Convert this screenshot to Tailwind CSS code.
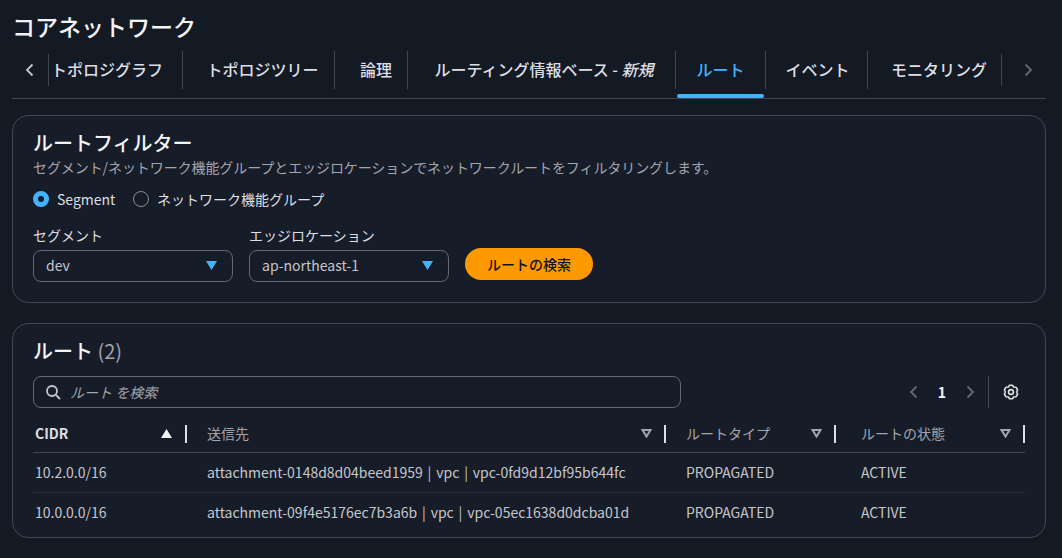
<!DOCTYPE html>
<html lang="ja">

<head>
  <meta charset="UTF-8">
  <title>コアネットワーク</title>
  <script src="https://cdn.jsdelivr.net/npm/@tailwindcss/browser@4"></script>
</head>

<body class="h-[558px] w-[1062px] overflow-hidden bg-[#131a23] text-[#dedee3] font-['Noto_Sans_CJK_JP','Noto_Sans',sans-serif]">
  <div class="pl-3 pr-4">
    <h1 class="h-[51px] pt-[8px] text-[23px] leading-[36px] font-medium text-[#f3f3f7]">コアネットワーク</h1>

    <!-- tabs -->
    <div class="flex h-[48px] border-b border-[#424650] text-[16px] font-medium">
      <div class="flex h-[47px] w-[36px] shrink-0 items-start pt-[11px] pl-[10px]">
        <svg class="h-4 w-4 text-[#c6c6cd]" viewBox="0 0 16 16" fill="none" stroke="currentColor" stroke-width="1.8"><path d="M10.5 2.5 5 8l5.5 5.5" /></svg>
      </div>
      <div class="mt-[3px] h-[32px] w-px bg-[#424650]"></div>
      <div class="flex h-[38px] w-[133px] items-center pb-[3px] pl-[2px]">トポロジグラフ</div>
      <div class="h-[38px] w-px bg-[#424650]"></div>
      <div class="flex h-[38px] w-[151px] items-center justify-center pb-[3px] pl-[8px]">トポロジツリー</div>
      <div class="h-[38px] w-px bg-[#424650]"></div>
      <div class="flex h-[38px] w-[72px] items-center justify-center pb-[3px] pl-[10px]">論理</div>
      <div class="h-[38px] w-px bg-[#424650]"></div>
      <div class="flex h-[38px] w-[267px] items-center justify-center pb-[3px] pl-[5px]">ルーティング情報ベース -&nbsp;<i>新規</i></div>
      <div class="h-[38px] w-px bg-[#424650]"></div>
      <div class="relative flex h-[38px] w-[89px] items-center justify-center pb-[3px] text-[#42b4ff]">
        ルート
        <div class="absolute top-[43px] left-[1px] right-[1px] h-[4px] rounded-[2px] bg-[#42b4ff]"></div>
      </div>
      <div class="h-[38px] w-px bg-[#424650]"></div>
      <div class="flex h-[38px] w-[101px] items-center justify-center pb-[3px] pl-[2px]">イベント</div>
      <div class="h-[38px] w-px bg-[#424650]"></div>
      <div class="flex h-[38px] w-[133px] items-center justify-center pb-[3px] pl-[9px]">モニタリング</div>
      <div class="mt-[3px] h-[32px] w-px bg-[#424650]"></div>
      <div class="flex h-[38px] items-center pl-[18px]">
        <svg class="h-4 w-4 text-[#656871]" viewBox="0 0 16 16" fill="none" stroke="currentColor" stroke-width="1.8"><path d="M5.5 2.5 11 8l-5.5 5.5" /></svg>
      </div>
    </div>

    <!-- route filter -->
    <section class="mt-4 h-[188px] rounded-2xl border border-[#424650] bg-[#161d28] px-[20px] pt-[13px]">
      <h2 class="text-[20px] leading-[28px] font-medium text-[#f3f3f7]">ルートフィルター</h2>
      <p class="text-[14px] leading-[20px] tracking-[-0.08px] text-[#a4a4ad]">セグメント/ネットワーク機能グループとエッジロケーションでネットワークルートをフィルタリングします。</p>
      <div class="mt-[12px] flex h-[20px] items-center text-[14px]">
        <span class="h-4 w-4 rounded-full border-[5px] border-[#42b4ff] bg-[#161d28]"></span>
        <span class="ml-2 w-[59px]">Segment</span>
        <span class="ml-[17px] h-4 w-4 rounded-full border border-[#8c8c94]"></span>
        <span class="ml-2">ネットワーク機能グループ</span>
      </div>
      <div class="mt-[17px] flex items-end gap-4">
        <div class="w-[200px]">
          <div class="text-[14px] leading-[18px]">セグメント</div>
          <div class="mt-[6px] flex h-[32px] items-center justify-between rounded-lg border border-[#656871] pr-[15px] pl-3 pb-px text-[14px] text-[#c6c6cd]">
            dev
            <svg class="h-[9px] w-[11px] text-[#42b4ff]" viewBox="0 0 11 9" fill="currentColor"><path d="M0 0h11L5.5 9z" /></svg>
          </div>
        </div>
        <div class="w-[200px]">
          <div class="text-[14px] leading-[18px]">エッジロケーション</div>
          <div class="mt-[6px] flex h-[32px] items-center justify-between rounded-lg border border-[#656871] pr-[15px] pl-3 pb-px text-[14px] text-[#c6c6cd]">
            ap-northeast-1
            <svg class="h-[9px] w-[11px] text-[#42b4ff]" viewBox="0 0 11 9" fill="currentColor"><path d="M0 0h11L5.5 9z" /></svg>
          </div>
        </div>
        <button class="mb-[2px] flex h-[32px] w-[128px] items-center justify-center rounded-full bg-[#ff9900] text-[14px] font-medium text-[#0f141a]">ルートの検索</button>
      </div>
    </section>

    <!-- routes -->
    <section class="mt-[20px] h-[215px] rounded-2xl border border-[#424650] bg-[#161d28] px-[20px] pt-[13px]">
      <h2 class="text-[20px] leading-[28px] font-medium text-[#f3f3f7]">ルート <span class="font-normal text-[#a4a4ad]">(2)</span></h2>
      <div class="mt-[11px] flex items-center">
        <div class="flex h-[32px] w-[648px] items-center rounded-lg border border-[#656871] pl-[11px] text-[14px] text-[#a4a4ad] italic">
          <svg class="mr-[9px] h-4 w-4 text-[#c6c6cd]" viewBox="0 0 16 16" fill="none" stroke="currentColor" stroke-width="1.8"><circle cx="7" cy="7" r="5" /><path d="m11 11 4 4" /></svg>
          ルート を検索
        </div>
        <div class="ml-[225px] flex h-[32px] items-center">
          <svg class="h-4 w-4 text-[#656871]" viewBox="0 0 16 16" fill="none" stroke="currentColor" stroke-width="1.8"><path d="M10.5 2.5 5 8l5.5 5.5" /></svg>
          <span class="w-[40px] text-center text-[14px] font-bold text-[#f3f3f7]">1</span>
          <svg class="h-4 w-4 text-[#656871]" viewBox="0 0 16 16" fill="none" stroke="currentColor" stroke-width="1.8"><path d="M5.5 2.5 11 8l-5.5 5.5" /></svg>
          <div class="ml-[10px] h-[32px] w-px bg-[#424650]"></div>
          <svg class="ml-[14px] h-4 w-4 text-[#dedee3]" viewBox="0 0 16 16" fill="none" stroke="currentColor" stroke-width="1.6" stroke-linejoin="round"><path d="M6.5 1.3h3L10.6 3l2.4.2 1.6 2.8L13.6 8l1 2-1.6 2.8-2.4.2-1.1 1.7h-3L5.4 13 3 12.8 1.4 10l1-2-1-2L3 3.2 5.4 3z" /><circle cx="8" cy="8" r="2.4" /></svg>
        </div>
      </div>
      <div class="mt-[7px] w-[992px] text-[14px]">
        <div class="grid h-[38px] grid-cols-[154px_479px_170px_189px] items-center border-b border-[#424650] text-[#a4a4ad]">
          <div class="flex items-center pl-[2px] font-bold text-[#dedee3]">
            CIDR
            <svg class="mr-[13px] ml-auto h-[9px] w-[11px] text-[#f3f3f7]" viewBox="0 0 11 9" fill="currentColor"><path d="M5.5 0 11 9H0z" /></svg>
            <div class="mr-0 h-[18px] w-[2px] bg-[#dedee3]"></div>
          </div>
          <div class="flex items-center pl-[20px]">
            送信先
            <svg class="mr-[12px] ml-auto h-[9px] w-[11px]" viewBox="0 0 11 9" fill="none" stroke="currentColor" stroke-width="2"><path d="M1.5 1h8L5.5 7.5z" /></svg>
            <div class="h-[18px] w-[2px] bg-[#dedee3]"></div>
          </div>
          <div class="flex items-center pl-[20px]">
            ルートタイプ
            <svg class="mr-[12px] ml-auto h-[9px] w-[11px]" viewBox="0 0 11 9" fill="none" stroke="currentColor" stroke-width="2"><path d="M1.5 1h8L5.5 7.5z" /></svg>
            <div class="h-[18px] w-[2px] bg-[#dedee3]"></div>
          </div>
          <div class="flex items-center pl-[25px]">
            ルートの状態
            <svg class="mr-[12px] ml-auto h-[9px] w-[11px]" viewBox="0 0 11 9" fill="none" stroke="currentColor" stroke-width="2"><path d="M1.5 1h8L5.5 7.5z" /></svg>
            <div class="h-[18px] w-[2px] bg-[#dedee3]"></div>
          </div>
        </div>
        <div class="grid h-[40px] grid-cols-[154px_479px_170px_189px] items-center border-b border-[#2a2f38] text-[#c6c6cd] [word-spacing:1.7px]">
          <div class="pl-[2px]">10.2.0.0/16</div>
          <div class="pl-[20px]">attachment-0148d8d04beed1959 | vpc | vpc-0fd9d12bf95b644fc</div>
          <div class="pl-[20px]">PROPAGATED</div>
          <div class="pl-[25px]">ACTIVE</div>
        </div>
        <div class="grid h-[39px] grid-cols-[154px_479px_170px_189px] items-center text-[#c6c6cd] [word-spacing:1.7px]">
          <div class="pl-[2px]">10.0.0.0/16</div>
          <div class="pl-[20px]">attachment-09f4e5176ec7b3a6b | vpc | vpc-05ec1638d0dcba01d</div>
          <div class="pl-[20px]">PROPAGATED</div>
          <div class="pl-[25px]">ACTIVE</div>
        </div>
      </div>
    </section>
  </div>
</body>

</html>
